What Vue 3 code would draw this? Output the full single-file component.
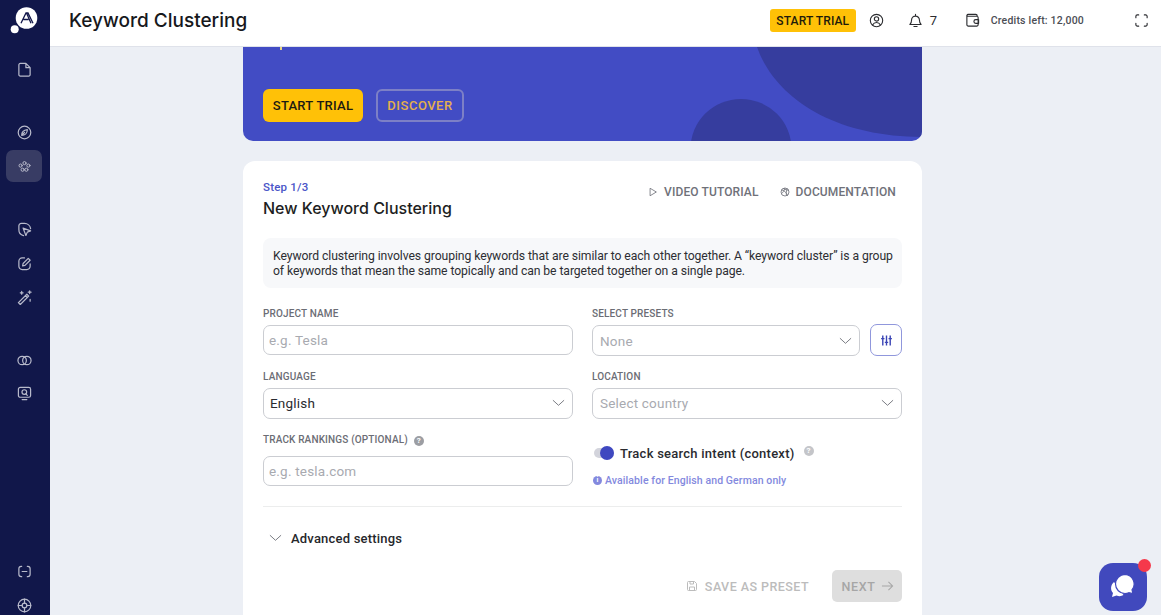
<template>
  <div class="app">
    <aside class="sidebar">
      <div class="logo">
        <svg width="32" height="36" viewBox="0 0 32 36">
          <circle cx="19.5" cy="18" r="10.8" fill="#fff" />
          <circle cx="7.7" cy="29.3" r="4" fill="#fff" />
          <path d="M14 23.300 L19 13 H21 L26 23.300 M19.500 13 L24 23.300 M16.500 19.500 H21.500" fill="none" stroke="#12174a" stroke-width="1.300" />
        </svg>
      </div>
      <div class="nav-group first">
        <span class="nav-item">
          <svg viewBox="0 0 16 16"><path d="M2 3a1.500 1.500 0 0 1 1.500-1.500H9.500L14 6v7.500a1.500 1.500 0 0 1-1.500 1.500h-9A1.500 1.500 0 0 1 2 13.500z M9.500 1.500V6H14" /></svg>
        </span>
      </div>
      <div class="nav-group second">
        <span class="nav-item">
          <svg viewBox="0 0 16 16"><circle cx="8" cy="8" r="6.700" /><path d="M5 11c0-3 2-5.500 6-6 0 3.500-2.500 6-6 6z M5 11l3-3" /></svg>
        </span>
        <span class="nav-item active">
          <svg viewBox="-2 -2 20 20"><circle cx="8" cy="3.500" r="2.100" /><circle cx="2.800" cy="6.800" r="2.100" /><circle cx="13.200" cy="6.800" r="2.100" /><circle cx="5.500" cy="12.300" r="2.100" /><circle cx="10.500" cy="12.300" r="2.100" /></svg>
        </span>
      </div>
      <div class="nav-group third">
        <span class="nav-item">
          <svg viewBox="0 0 16 16"><path d="M7 14.500A6.500 6.500 0 0 1 2 8V4a2.500 2.500 0 0 1 2.500-2.500H8A6.500 6.500 0 0 1 14.500 7" /><path d="M6.500 6.500l8 3-3.500 1.300-1.500 3.500z" /></svg>
        </span>
        <span class="nav-item">
          <svg viewBox="0 0 16 16"><path d="M14 8.500V11a3.500 3.500 0 0 1-3.500 3.500h-5A3.500 3.500 0 0 1 2 11V5.500A3.500 3.500 0 0 1 5.500 2H8" /><path d="M6 10.500l.5-2.500L12 2.500l2 2L8.500 10z" /></svg>
        </span>
        <span class="nav-item">
          <svg viewBox="0 0 16 16"><path d="M1.500 13.500 L10.500 4.500 L12.500 6.500 L3.500 15.500z M9 6l2 2" /><path d="M13.500 .8v3M12 2.300h3M5 1.500v3M3.500 3h3M14 10v2" /></svg>
        </span>
      </div>
      <div class="nav-group fourth">
        <span class="nav-item">
          <svg viewBox="0 0 16 16"><circle cx="5.500" cy="8" r="4.500" /><circle cx="10.500" cy="8" r="4.500" /></svg>
        </span>
        <span class="nav-item">
          <svg viewBox="0 0 16 16"><rect x="1.500" y="1.500" width="13" height="10.500" rx="2" /><circle cx="7.800" cy="6.500" r="2.500" /><path d="M9.500 8.500l1.500 1.500M5.500 14.500h5" /></svg>
        </span>
      </div>
      <div class="nav-group bottom">
        <span class="nav-item">
          <svg viewBox="0 0 16 16"><path d="M5 2.500H4.500A2.500 2.500 0 0 0 2 5v6a2.500 2.500 0 0 0 2.500 2.500H5M11 2.500h.5A2.500 2.500 0 0 1 14 5v6a2.500 2.500 0 0 1-2.500 2.500H11M5.500 8h5" /></svg>
        </span>
        <span class="nav-item">
          <svg viewBox="0 0 16 16"><circle cx="8" cy="8" r="6.700" /><circle cx="8" cy="8" r="2.500" /><path d="M8 1.300v4.200M8 10.500v4.200M1.300 8h4.200M10.500 8h4.200" /></svg>
        </span>
      </div>
    </aside>

    <div class="workspace">
      <header class="topbar">
        <h1 class="page-title">Keyword Clustering</h1>
        <div class="top-actions">
          <button class="trial-small">START TRIAL</button>
          <svg class="top-icon user" viewBox="0 0 16 16"><circle cx="8" cy="8" r="6.600" /><circle cx="8" cy="6.300" r="2.300" /><path d="M3.800 12.800c1-2 2.500-2.700 4.200-2.700s3.200.7 4.200 2.700" /></svg>
          <svg class="top-icon bell" viewBox="0 0 16 16"><path d="M2 12.200c1.500-1.200 1.800-2.500 1.800-4.700a4.200 4.200 0 0 1 8.400 0c0 2.200.3 3.500 1.800 4.700z M6.300 14.400h3.400 M8 1.500v1.800" /></svg>
          <span class="bell-count">7</span>
          <svg class="top-icon wallet" viewBox="0 0 16 16"><path d="M2 2.500v10A1.500 1.500 0 0 0 3.500 14h9a1.500 1.500 0 0 0 1.500-1.500V5a1.500 1.500 0 0 0-1.500-1.500H3.500A1.500 1.500 0 0 1 2 2.500 M14.500 7h-3a2 2 0 0 0 0 4h3z M2 2.500A1.500 1.500 0 0 1 3.500 1.500h8A1.500 1.500 0 0 1 13 3" /></svg>
          <span class="credits">Credits left: 12,000</span>
          <svg class="top-icon expand" viewBox="0 0 16 16"><path d="M5 2H3.500A1.500 1.500 0 0 0 2 3.500V5M11 2h1.500A1.500 1.500 0 0 1 14 3.500V5M5 14H3.500A1.500 1.500 0 0 1 2 12.500V11M11 14h1.500a1.500 1.500 0 0 0 1.500-1.500V11" /></svg>
        </div>
      </header>

      <main class="content">
        <section class="banner">
          <svg class="banner-art" viewBox="0 0 679 95" preserveAspectRatio="none">
            <path d="M514 0C532 52 592 91 679 91V0z" fill="#363d9e" />
            <circle cx="498" cy="103" r="50.500" fill="#363d9e" />
          </svg>
          <i class="clipped-mark"></i>
          <div class="banner-actions">
            <button class="btn-trial">START TRIAL</button>
            <button class="btn-discover">DISCOVER</button>
          </div>
        </section>

        <section class="card">
          <div class="card-head">
            <div>
              <div class="step">Step 1/3</div>
              <h2 class="card-title">New Keyword Clustering</h2>
            </div>
            <div class="links">
              <a class="link">
                <svg viewBox="0 0 12 12"><path d="M2.500 1.500 L10 6 L2.500 10.500z" /></svg>
                VIDEO TUTORIAL
              </a>
              <a class="link">
                <svg viewBox="0 0 12 12"><circle cx="6" cy="6" r="4.800" /><path d="M2 3.500c3 .5 6 3 7 7M6 1.200C5 4 3.500 7 1.800 8M4 1.800c2 1.500 5 2 6.500 2.200M8 10.300C7 8 7.500 5.500 8.500 2" /></svg>
                DOCUMENTATION
              </a>
            </div>
          </div>

          <p class="intro">Keyword clustering involves grouping keywords that are similar to each other together. A “keyword cluster” is a group of keywords that mean the same topically and can be targeted together on a single page.</p>

          <div class="form-grid">
            <div class="field">
              <label>PROJECT NAME</label>
              <div class="control input placeholder">e.g. Tesla</div>
            </div>
            <div class="field">
              <label>SELECT PRESETS</label>
              <div class="preset-row">
                <div class="control select tall placeholder">None<svg class="chev" viewBox="0 0 14 8"><path d="M1 1l6 5.500L13 1" /></svg></div>
                <button class="tune">
                  <svg viewBox="0 0 14 14"><path d="M3 1.500v11M7 1.500v11M11 1.500v11M1.200 5h3.600M5.200 9h3.600M9.200 5h3.600" /></svg>
                </button>
              </div>
            </div>
            <div class="field">
              <label>LANGUAGE</label>
              <div class="control select tall raised value">English<svg class="chev" viewBox="0 0 14 8"><path d="M1 1l6 5.500L13 1" /></svg></div>
            </div>
            <div class="field">
              <label>LOCATION</label>
              <div class="control select tall raised placeholder">Select country<svg class="chev" viewBox="0 0 14 8"><path d="M1 1l6 5.500L13 1" /></svg></div>
            </div>
            <div class="field">
              <label class="with-help">TRACK RANKINGS (OPTIONAL)
                <span class="help dark">?</span>
              </label>
              <div class="control input placeholder ranking">e.g. tesla.com</div>
            </div>
            <div class="field intent">
              <div class="toggle-row">
                <span class="toggle"><span class="thumb"></span></span>
                <span class="toggle-label">Track search intent (context)</span>
                <span class="help light">?</span>
              </div>
              <div class="availability"><span class="info-dot">i</span>Available for English and German only</div>
            </div>
          </div>

          <div class="divider"></div>

          <div class="advanced">
            <svg class="chev" viewBox="0 0 14 8"><path d="M1 1l6 5.500L13 1" /></svg>
            <span>Advanced settings</span>
          </div>

          <div class="footer-actions">
            <button class="save">
              <svg viewBox="0 0 12 12"><path d="M1.500 2.500a1 1 0 0 1 1-1h6L10.500 3.500v6a1 1 0 0 1-1 1h-7a1 1 0 0 1-1-1z M4 1.500v2.500h3.500V1.500 M3.500 10.500V7h5v3.500" /></svg>
              SAVE AS PRESET
            </button>
            <button class="next">
              NEXT
              <svg viewBox="0 0 14 12"><path d="M1 6h11.500M8 1.500 12.500 6 8 10.500" /></svg>
            </button>
          </div>
        </section>
      </main>
    </div>

    <div class="chat">
      <svg viewBox="0 0 26 26" width="26" height="26">
        <path d="M4 8c-3.500 3-3.800 8-1 11l-1 4 4.500-1.500c2.500 1 5 .8 7-.5z" fill="#fff" />
        <path d="M15 .5a9.500 9.500 0 1 0 0 19c1.300 0 2.600-.3 3.800-.8l4.200 1-1-3.800A9.500 9.500 0 0 0 15 .5z" fill="#fff" stroke="#4149bd" stroke-width="1.200" />
      </svg>
      <span class="chat-dot"></span>
    </div>
  </div>
</template>

<script setup>
</script>

<style>
html, body { margin: 0; height: 100%; overflow: hidden; background: #eceff5; }
</style>

<style scoped>
* { box-sizing: border-box; }
button { font-family: inherit; cursor: pointer; border: 0; padding: 0; }
.app {
  display: flex;
  height: 615px;
  width: 1161px;
  overflow: hidden;
  position: relative;
  font-family: Roboto, "Noto Sans", sans-serif;
  background: #eceff5;
  color: #26272b;
}
.sidebar {
  width: 50px;
  flex: none;
  background: #11174a;
  display: flex;
  flex-direction: column;
  height: 615px;
}
.logo { height: 46px; padding-left: 7px; flex: none; }
.logo svg { display: block; }
.nav-group { display: flex; flex-direction: column; align-items: center; padding-right: 2px; }
.nav-item {
  width: 36px;
  height: 32px;
  display: flex;
  align-items: center;
  justify-content: center;
  border-radius: 7px;
}
.nav-item svg {
  width: 15px;
  height: 15px;
  fill: none;
  stroke: #b8bacb;
  stroke-width: 1.300;
  stroke-linejoin: round;
  stroke-linecap: round;
}
.nav-item.active { background: #383c64; }
.nav-group.first { margin-top: 7px; }
.nav-group.second { margin-top: 31px; gap: 2px; }
.nav-group.third { margin-top: 31px; gap: 2px; }
.nav-group.fourth { margin-top: 31px; gap: 1px; }
.nav-group.bottom { margin-top: auto; margin-bottom: -6px; gap: 2px; }

.workspace { flex: 1; min-width: 0; display: flex; flex-direction: column; }
.topbar {
  height: 47px;
  flex: none;
  background: #fff;
  border-bottom: 1px solid #dfe2ea;
  display: flex;
  align-items: center;
  padding: 0 12px 5px 19px;
  position: relative;
  z-index: 1;
}
.page-title {
  margin: 0;
  font-family: Inter, sans-serif;
  font-size: 19px;
  font-weight: 500;
  color: #17181c;
}
.top-actions { margin-left: auto; display: flex; align-items: center; }
.trial-small {
  width: 86px;
  height: 23px;
  background: #ffc107;
  border-radius: 3px;
  font-size: 12px;
  font-weight: 500;
  letter-spacing: 0.1px;
  color: #1f1b0a;
  margin-right: 13px;
}
.top-icon {
  width: 15px;
  height: 15px;
  fill: none;
  stroke: #2b2c30;
  stroke-width: 1.200;
  stroke-linejoin: round;
  stroke-linecap: round;
  flex: none;
}
.top-icon.bell { margin-left: 24px; }
.bell-count { font-size: 13px; margin-left: 7px; width: 9px; color: #2b2c30; }
.top-icon.wallet { margin-left: 26px; }
.credits { font-size: 10.500px; font-weight: 500; margin-left: 11px; letter-spacing: 0.2px; color: #4b4d55; }
.top-icon.expand { margin-left: 50px; }

.content { flex: 1; min-height: 0; padding-left: 193px; width: 872px; }
.banner {
  height: 94px;
  width: 679px;
  background: #424cc4;
  border-radius: 0 0 10px 10px;
  position: relative;
  overflow: hidden;
  display: flex;
  align-items: flex-end;
  padding: 0 20px 19px;
}
.banner-art { position: absolute; inset: 0; width: 100%; height: 100%; }
.clipped-mark {
  position: absolute;
  left: 37px;
  top: 0;
  width: 2px;
  height: 3px;
  background: #e6d583;
}
.banner-actions { position: relative; display: flex; gap: 13px; align-items: flex-start; }
.btn-trial {
  width: 100px;
  height: 33px;
  background: #ffc107;
  border-radius: 6px;
  font-size: 13px;
  font-weight: 500;
  letter-spacing: 0.25px;
  color: #1c1a12;
}
.btn-discover {
  width: 88px;
  height: 33px;
  background: transparent;
  border: 2px solid #7d80c6;
  border-radius: 6px;
  font-size: 13px;
  font-weight: 500;
  letter-spacing: 0.5px;
  color: #e4b04c;
}

.card {
  width: 679px;
  margin-top: 20px;
  background: #fff;
  border-radius: 12px 12px 0 0;
  padding: 20px;
  height: 480px;
}
.card-head { display: flex; justify-content: space-between; align-items: flex-start; }
.step { font-size: 11.500px; font-weight: 500; color: #4a55c8; line-height: 13px; letter-spacing: .2px; }
.card-title {
  margin: 4px 0 0;
  font-family: Inter, sans-serif;
  font-size: 16px;
  line-height: 20px;
  font-weight: 500;
  color: #1d1e22;
}
.links { display: flex; gap: 21px; padding: 4px 6px 0 0; }
.link {
  display: flex;
  align-items: center;
  gap: 6px;
  font-size: 12px;
  font-weight: 500;
  letter-spacing: 0.12px;
  color: #6f7179;
  line-height: 14px;
}
.link svg { width: 10px; height: 10px; fill: none; stroke: #6f7179; stroke-width: 1; }
.intro {
  margin: 20px 0 0;
  height: 50px;
  padding: 11px 8px 9px 10px;
  background: #f7f8fa;
  border-radius: 8px;
  font-size: 12.200px;
  line-height: 15px;
  letter-spacing: -0.08px;
  color: #2d2e33;
}
.form-grid {
  display: grid;
  grid-template-columns: 310px 310px;
  column-gap: 19px;
  row-gap: 14px;
  margin-top: 19px;
}
.field { display: flex; flex-direction: column; min-width: 0; }
.field label {
  font-size: 10px;
  font-weight: 500;
  letter-spacing: 0.15px;
  color: #6b6d75;
  line-height: 13px;
  margin-bottom: 5px;
  display: flex;
  align-items: center;
}
.control {
  height: 30px;
  border: 1px solid #cbcdd2;
  border-radius: 7px;
  display: flex;
  align-items: center;
  padding: 0 5px;
  font-size: 13.500px;
  letter-spacing: 0.2px;
  background: #fff;
}
.control.tall { height: 31px; padding-left: 6px; }
.field:nth-child(even) .control.tall { padding-left: 7px; }
.control.raised { padding-bottom: 1px; }
.select { position: relative; justify-content: space-between; padding-right: 7px; }
.placeholder { color: #a8aab0; }
.value { color: #2a2b30; }
.chev { width: 13px; height: 8px; fill: none; stroke: #70727a; stroke-width: 1; flex: none; }
.preset-row { display: flex; gap: 10px; }
.preset-row .select { flex: 1; }
.tune {
  width: 32px;
  height: 32px;
  border: 1px solid #9097dc;
  border-radius: 7px;
  background: #fff;
  display: flex;
  align-items: center;
  justify-content: center;
  margin-top: -1px;
}
.tune svg { width: 13px; height: 13px; fill: none; stroke: #3a44b5; stroke-width: 1.500; }
.help {
  width: 10px;
  height: 10px;
  border-radius: 50%;
  font-size: 8px;
  font-weight: 700;
  color: #fff;
  display: inline-flex;
  align-items: center;
  justify-content: center;
  line-height: 1;
}
.help.dark { background: #9c9ea3; margin-left: 6px; margin-top: 3px; }
.help.light { background: #c4c5c9; margin-left: 9px; margin-top: -5px; }
.ranking { margin-top: 5px; }
.intent { padding-top: 11px; }
.toggle-row { display: flex; align-items: center; height: 18px; padding-left: 2px; }
.toggle {
  width: 20px;
  height: 10px;
  border-radius: 5px;
  background: #d3d4dc;
  position: relative;
  flex: none;
}
.thumb {
  position: absolute;
  right: 0;
  top: -2px;
  width: 14px;
  height: 14px;
  border-radius: 50%;
  background: #3f48c0;
}
.toggle-label { font-size: 13px; font-weight: 500; margin-left: 6px; letter-spacing: 0.25px; color: #2a2b30; }
.availability {
  margin-top: 12px;
  display: flex;
  align-items: center;
  font-size: 10.500px;
  font-weight: 500;
  letter-spacing: 0.1px;
  color: #8389de;
  line-height: 13px;
}
.info-dot {
  width: 9px;
  height: 9px;
  border-radius: 50%;
  background: #8389de;
  color: #fff;
  font-size: 7px;
  font-weight: 700;
  display: inline-flex;
  align-items: center;
  justify-content: center;
  margin-left: 1px;
  margin-right: 3px;
}
.divider { height: 1px; background: #eceded; margin-top: 19px; }
.advanced {
  display: flex;
  align-items: center;
  height: 18px;
  margin-top: 22px;
  padding-left: 6px;
  gap: 9px;
  font-size: 13px;
  font-weight: 500;
  letter-spacing: 0.2px;
  color: #26272b;
}
.footer-actions { display: flex; justify-content: flex-end; align-items: center; gap: 23px; margin-top: 23px; }
.save {
  background: none;
  display: flex;
  align-items: center;
  gap: 7px;
  font-size: 12.500px;
  font-weight: 500;
  letter-spacing: 0.45px;
  color: #bcbcbc;
}
.save svg { width: 12px; height: 12px; fill: none; stroke: #bcbcbc; stroke-width: 1; }
.next {
  width: 70px;
  height: 32px;
  background: #dedede;
  border-radius: 5px;
  display: flex;
  align-items: center;
  justify-content: center;
  gap: 6px;
  padding-left: 2px;
  font-size: 12.500px;
  font-weight: 500;
  letter-spacing: 0.6px;
  color: #a6a6a6;
}
.next svg { width: 13px; height: 12px; fill: none; stroke: #a6a6a6; stroke-width: 1.100; }
.chat {
  position: absolute;
  left: 1099px;
  top: 563px;
  width: 48px;
  height: 48px;
  background: #4149bd;
  border-radius: 14px;
  display: flex;
  align-items: center;
  justify-content: center;
}
.chat-dot {
  position: absolute;
  right: -4px;
  top: -4px;
  width: 13px;
  height: 13px;
  border-radius: 50%;
  background: #f5394b;
}
</style>
